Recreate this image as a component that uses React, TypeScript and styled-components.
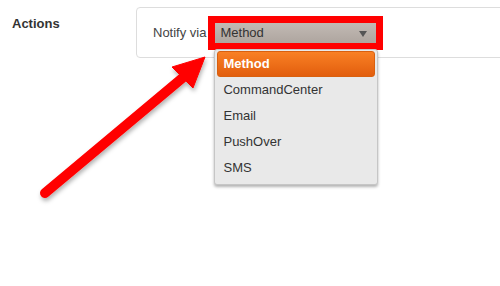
import React from 'react';
import styled, { createGlobalStyle } from 'styled-components';

const GlobalStyle = createGlobalStyle`
  html, body {
    margin: 0;
    padding: 0;
    background: #ffffff;
    font-family: "Liberation Sans", Arial, sans-serif;
  }
`;

const Page = styled.div`
  position: relative;
  width: 500px;
  height: 286px;
  overflow: hidden;
`;

const Row = styled.div`
  display: flex;
  align-items: flex-start;
  width: 600px;
`;

const Label = styled.div`
  flex: 0 0 124px;
  padding: 16px 0 0 12px;
  font-size: 13px;
  font-weight: bold;
  color: #333333;
`;

const Panel = styled.div`
  flex: 1;
  margin-top: 7px;
  height: 51px;
  box-sizing: border-box;
  border: 1px solid #dddddd;
  border-radius: 4px;
  display: flex;
  align-items: center;
  padding-left: 16px;
  gap: 9px;
`;

const FieldLabel = styled.span`
  font-size: 13px;
  color: #444444;
`;

const SelectWrap = styled.div`
  position: relative;
`;

const Select = styled.div`
  width: 161px;
  height: 20px;
  box-sizing: border-box;
  outline: 7px solid #ff0000;
  background: linear-gradient(#c2bab4, #aea59f);
  display: flex;
  align-items: center;
  justify-content: space-between;
  padding: 0 9px 0 5px;
  font-size: 13px;
  color: #333333;
`;

const Caret = styled.span`
  width: 0;
  height: 0;
  border-left: 4px solid transparent;
  border-right: 4px solid transparent;
  border-top: 6px solid #555555;
  margin-top: 2px;
`;

const Menu = styled.ul`
  position: absolute;
  top: 26px;
  left: -1px;
  width: 164px;
  height: 136px;
  box-sizing: border-box;
  margin: 0;
  padding: 1px 2px;
  list-style: none;
  background: #e9e9e9;
  border: 1px solid #c6c6c6;
  border-radius: 3px;
  box-shadow: 0 2px 3px rgba(0, 0, 0, 0.3);
`;

const Item = styled.li<{ $active?: boolean }>`
  height: 26px;
  box-sizing: border-box;
  display: flex;
  align-items: center;
  padding-left: 5px;
  font-size: 13px;
  border-radius: 3px;
  color: ${(p) => (p.$active ? '#ffffff' : '#333333')};
  font-weight: ${(p) => (p.$active ? 'bold' : 'normal')};
  background: ${(p) => (p.$active ? 'linear-gradient(#f98024, #e25e0e)' : 'transparent')};
  border: 1px solid ${(p) => (p.$active ? '#d9600f' : 'transparent')};
`;

const Overlay = styled.svg`
  position: absolute;
  left: 0;
  top: 0;
  pointer-events: none;
`;

const options = ['Method', 'CommandCenter', 'Email', 'PushOver', 'SMS'];

const App: React.FC = () => {
  return (
    <Page>
      <GlobalStyle />
      <Row>
        <Label>Actions</Label>
        <Panel>
          <FieldLabel>Notify via</FieldLabel>
          <SelectWrap>
            <Select>
              <span>Method</span>
              <Caret />
            </Select>
            <Menu>
              {options.map((o, i) => (
                <Item key={o} $active={i === 0}>
                  {o}
                </Item>
              ))}
            </Menu>
          </SelectWrap>
        </Panel>
      </Row>
      <Overlay width="500" height="286" viewBox="0 0 500 286">
        <defs>
          <filter id="shadow" x="-20%" y="-20%" width="140%" height="140%">
            <feDropShadow dx="1" dy="3" stdDeviation="2" floodColor="#000" floodOpacity="0.3" />
          </filter>
        </defs>
        <g filter="url(#shadow)" fill="#ff0000" stroke="#ff0000">
          <line x1="45" y1="193" x2="186" y2="75" strokeWidth="10" strokeLinecap="round" />
          <polygon points="172,67 205,57 193,88" strokeWidth="1" strokeLinejoin="round" />
        </g>
      </Overlay>
    </Page>
  );
};

export default App;
